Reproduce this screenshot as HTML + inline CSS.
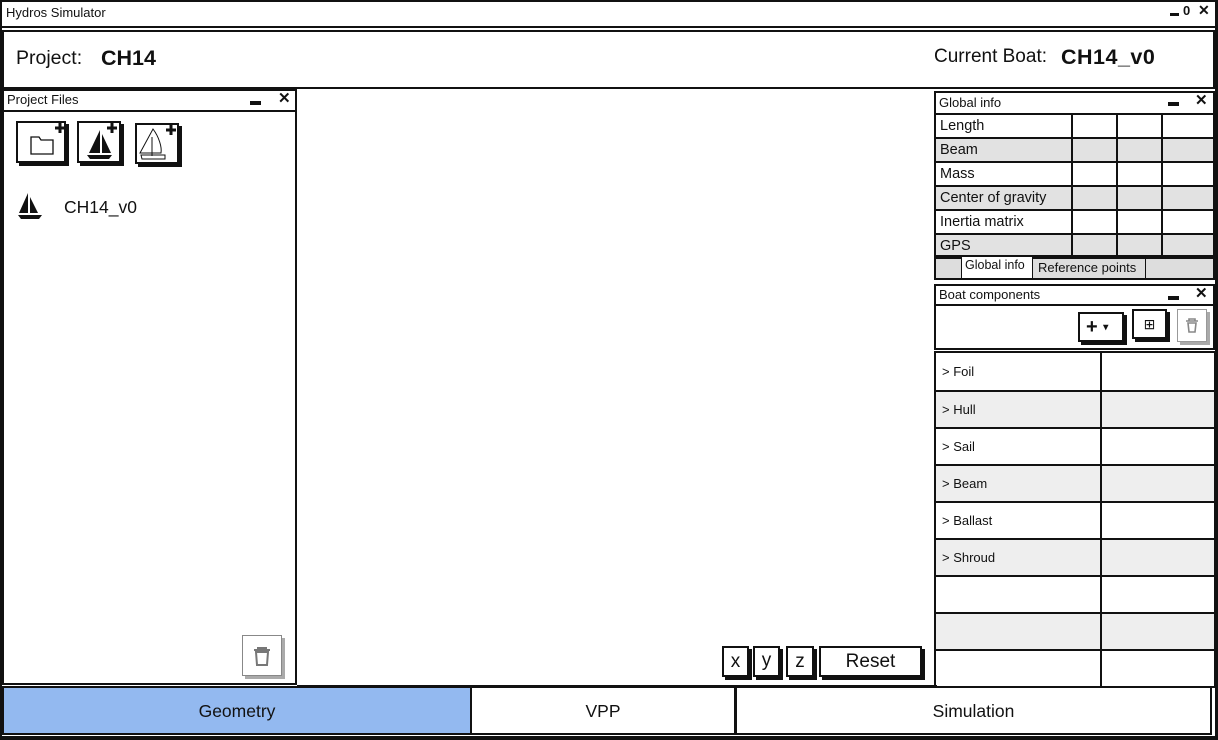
<!DOCTYPE html>
<html><head><meta charset="utf-8"><style>
*{box-sizing:border-box;margin:0;padding:0}
body{width:1218px;height:740px;background:#fff;position:relative;font-family:"Liberation Sans",sans-serif;color:#111;overflow:hidden}
.a{position:absolute}
.b{border:2px solid #111}
.t{font-size:13px}
.btn{position:absolute;background:#fff;border:2px solid #111;box-shadow:3px 3px 0 #111;text-align:center}
.row{position:absolute;left:0;right:0;border-bottom:2px solid #111;font-size:14.5px;padding-left:4px}
.g{background:#e2e2e2}
.lg{background:#eee}
</style></head><body>
<div class="a b" style="left:0;top:0;width:1218px;height:740px;border-width:2px 3px 4px 2px"></div>
<div class="a" style="left:0;top:26px;width:1218px;height:2px;background:#111"></div>
<div class="a t" style="left:6px;top:5px">Hydros Simulator</div>
<div class="a" style="left:1170px;top:13px;width:9px;height:3px;background:#111"></div>
<div class="a" style="left:1183px;top:3px;font-size:13px;font-weight:bold">0</div>
<div class="a" style="left:1198px;top:2px;font-size:14px;font-weight:bold">✕</div>
<div class="a b" style="left:2px;top:30px;width:1213px;height:59px"></div>
<div class="a" style="left:16px;top:47px;font-size:19.5px">Project:</div>
<div class="a" style="left:101px;top:46px;font-size:21.5px;font-weight:bold">CH14</div>
<div class="a" style="left:934px;top:46px;font-size:19px">Current Boat:</div>
<div class="a" style="left:1061px;top:45px;font-size:21.5px;font-weight:bold;letter-spacing:0.5px">CH14_v0</div>
<div class="a b" style="left:2px;top:89px;width:295px;height:596px"></div>
<div class="a" style="left:2px;top:110px;width:295px;height:2px;background:#111"></div>
<div class="a t" style="left:7px;top:92px">Project Files</div>
<div class="a" style="left:250px;top:101px;width:11px;height:4px;background:#111"></div>
<div class="a" style="left:278px;top:89px;font-size:15px;font-weight:bold">✕</div>
<div class="btn" style="left:16px;top:121px;width:50px;height:42px;border-width:2px">
<svg width="46" height="38"><path d="M13 14h8l2 3h12v14H13z" fill="none" stroke="#111" stroke-width="1.3"/><path d="M42 0v10M37 5h10" stroke="#111" stroke-width="3"/></svg></div>
<div class="btn" style="left:77px;top:121px;width:44px;height:42px">
<svg width="40" height="38"><path d="M21 7L10 30h11zM23 11l9 19h-9z" fill="#111"/><path d="M8 32h25l-3 4H11z" fill="#111"/><path d="M33 0v10M28 5h10" stroke="#111" stroke-width="3"/></svg></div>
<div class="btn" style="left:135px;top:123px;width:44px;height:41px">
<svg width="40" height="37"><path d="M16 4C22 12 25 22 24 28H3zM15 12v19M4 30h24v4H5z" fill="none" stroke="#111" stroke-width="1"/><path d="M34 0v10M29 5h10" stroke="#111" stroke-width="3"/></svg></div>
<svg class="a" style="left:16px;top:192px" width="28" height="30"><path d="M12 1L3 21h9zM14 5l8 16h-8z" fill="#111"/><path d="M2 23h24l-3 4H5z" fill="#111"/></svg>
<div class="a" style="left:64px;top:197px;font-size:17.5px">CH14_v0</div>
<div class="btn" style="left:242px;top:635px;width:40px;height:41px;border:1px solid #888;box-shadow:3px 3px 0 #aaa">
<svg width="38" height="39"><path d="M11 14h16M15 14v-2h8v2M13 16h12l-1 13H14z" fill="none" stroke="#777" stroke-width="2"/><path d="M17 18v9M19 18v9M21 18v9" stroke="#fff" stroke-width="1"/></svg></div>
<div class="btn" style="left:722px;top:646px;width:27px;height:31px;font-size:19px;line-height:28px">x</div>
<div class="btn" style="left:753px;top:646px;width:27px;height:31px;font-size:19px;line-height:26px">y</div>
<div class="btn" style="left:786px;top:646px;width:28px;height:31px;font-size:19px;line-height:28px">z</div>
<div class="btn" style="left:819px;top:646px;width:103px;height:31px;font-size:19px;line-height:28px">Reset</div>
<div class="a" style="left:297px;top:685px;width:640px;height:1px;background:#111"></div>
<div class="a b" style="left:934px;top:91px;width:281px;height:166px;overflow:hidden">
 <div class="a t" style="left:3px;top:2px">Global info</div>
 <div class="a" style="left:232px;top:9px;width:11px;height:4px;background:#111"></div>
 <div class="a" style="left:259px;top:-2px;font-size:15px;font-weight:bold">✕</div>
 <div class="a" style="left:0;top:20px;width:281px;height:2px;background:#111"></div>
 <div class="row" style="top:22px;height:24px;line-height:22px">Length</div>
 <div class="row g" style="top:46px;height:24px;line-height:22px">Beam</div>
 <div class="row" style="top:70px;height:24px;line-height:22px">Mass</div>
 <div class="row g" style="top:94px;height:24px;line-height:22px">Center of gravity</div>
 <div class="row" style="top:118px;height:24px;line-height:22px">Inertia matrix</div>
 <div class="row g" style="top:142px;height:24px;line-height:22px;border:0">GPS</div>
 <div class="a" style="left:135px;top:22px;width:2px;height:150px;background:#111"></div>
 <div class="a" style="left:180px;top:22px;width:2px;height:150px;background:#111"></div>
 <div class="a" style="left:225px;top:22px;width:2px;height:150px;background:#111"></div>
</div>
<div class="a b" style="left:934px;top:257px;width:281px;height:23px;background:#ddd"></div>
<div class="a" style="left:961px;top:257px;width:72px;height:22px;background:#fff;border:1px solid #111;border-top:0;font-size:12.5px;padding-left:3px;line-height:17px">Global info</div>
<div class="a" style="left:1035px;top:259px;width:111px;height:20px;border-right:1px solid #111;font-size:13px;padding-left:3px;line-height:17px">Reference points</div>
<div class="a b" style="left:934px;top:284px;width:281px;height:66px"></div>
<div class="a" style="left:934px;top:304px;width:281px;height:2px;background:#111"></div>
<div class="a t" style="left:939px;top:287px">Boat components</div>
<div class="a" style="left:1168px;top:296px;width:11px;height:4px;background:#111"></div>
<div class="a" style="left:1195px;top:284px;font-size:15px;font-weight:bold">✕</div>
<div class="btn" style="left:1078px;top:312px;width:46px;height:30px;font-size:20px;font-weight:bold;line-height:26px;text-align:left;padding-left:6px">+ <span style="font-size:10px;vertical-align:3px">▾</span></div>
<div class="btn" style="left:1132px;top:309px;width:35px;height:30px;font-size:14px;line-height:26px">⊞</div>
<div class="btn" style="left:1177px;top:309px;width:30px;height:33px;border:1px solid #999;box-shadow:3px 3px 0 #aaa">
<svg width="28" height="31"><path d="M8 11h12M11 11v-2h6v2M10 13h8l-1 9h-6z" fill="none" stroke="#888" stroke-width="1.6"/></svg></div>
<div class="a b" style="left:934px;top:351px;width:282px;height:337px;overflow:hidden">
 <div class="row" style="top:0;height:39px;line-height:38px;font-size:13px;padding-left:6px">&gt; Foil</div>
 <div class="row lg" style="top:39px;height:37px;line-height:35px;font-size:13px;padding-left:6px">&gt; Hull</div>
 <div class="row" style="top:76px;height:37px;line-height:35px;font-size:13px;padding-left:6px">&gt; Sail</div>
 <div class="row lg" style="top:113px;height:37px;line-height:35px;font-size:13px;padding-left:6px">&gt; Beam</div>
 <div class="row" style="top:150px;height:37px;line-height:35px;font-size:13px;padding-left:6px">&gt; Ballast</div>
 <div class="row lg" style="top:187px;height:37px;line-height:35px;font-size:13px;padding-left:6px">&gt; Shroud</div>
 <div class="row" style="top:224px;height:37px"></div>
 <div class="row lg" style="top:261px;height:37px"></div>
 <div class="row" style="top:298px;height:37px;border:0"></div>
 <div class="a" style="left:164px;top:0;width:2px;height:340px;background:#111"></div>
</div>
<div class="a" style="left:2px;top:686px;width:470px;height:49px;background:#93b9f0;border:2px solid #111;text-align:center;line-height:46px;font-size:17.5px">Geometry</div>
<div class="a" style="left:472px;top:686px;width:264px;height:49px;border:2px solid #111;border-left:0;text-align:center;line-height:46px;font-size:17.5px">VPP</div>
<div class="a" style="left:735px;top:686px;width:477px;height:49px;border:2px solid #111;text-align:center;line-height:46px;font-size:17.5px">Simulation</div>
</body></html>
